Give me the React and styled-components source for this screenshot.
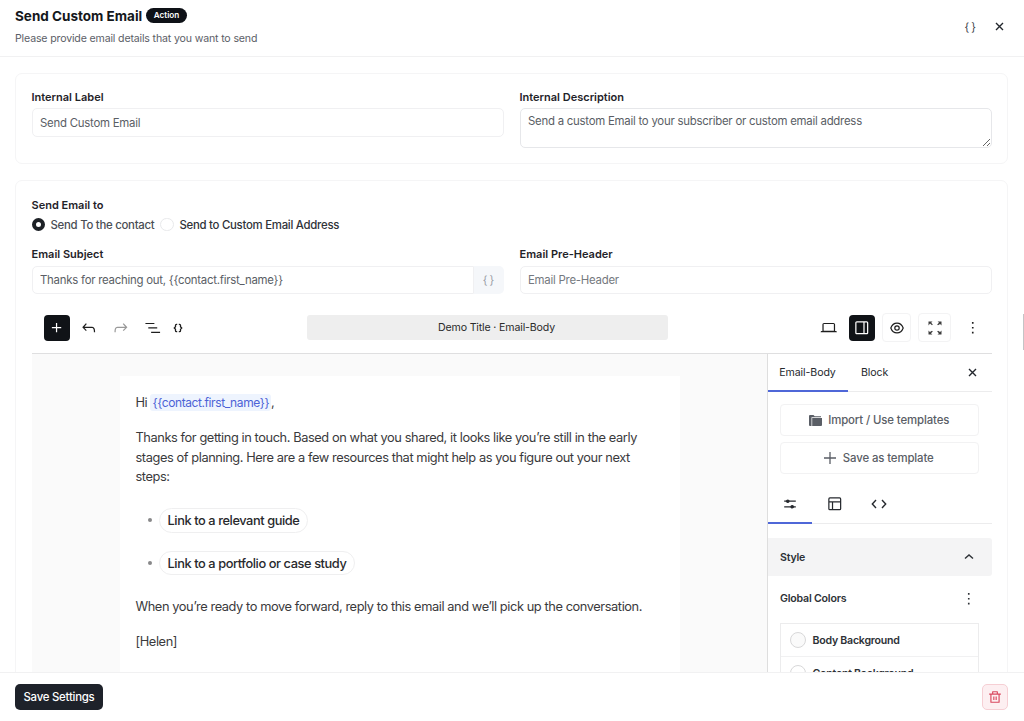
import React, { useState } from "react";
import styled, { createGlobalStyle } from "styled-components";

const GlobalStyle = createGlobalStyle`
  * {
    box-sizing: border-box;
  }
  body {
    margin: 0;
    background: #fff;
    color: #23272d;
    font-family: Inter, "Liberation Sans", sans-serif;
    font-size: 11.4px;
    letter-spacing: -0.24px;
    -webkit-font-smoothing: antialiased;
  }
  button, input, textarea {
    font-family: inherit;
    font-size: inherit;
    letter-spacing: inherit;
  }
  button {
    padding: 0;
    border: none;
    background: none;
    color: inherit;
    cursor: pointer;
  }
  svg {
    flex: none;
  }
`;

const Drawer = styled.div`
  display: flex;
  flex-direction: column;
  height: 721px;
  overflow: hidden;
`;

const Header = styled.header`
  display: flex;
  flex: none;
  align-items: center;
  justify-content: space-between;
  height: 57px;
  padding: 0 20px 3px 15px;
  border-bottom: 1px solid #f1f1f2;
`;

const TitleRow = styled.div`
  display: flex;
  align-items: center;
  gap: 4px;
  height: 18px;
`;

const Title = styled.h1`
  margin: 0;
  color: #15181c;
  font-size: 13.5px;
  font-weight: 700;
  letter-spacing: 0;
  white-space: nowrap;
`;

const Badge = styled.span`
  height: 15px;
  padding: 0 7.5px;
  border-radius: 8px;
  background: #0e1117;
  color: #fff;
  font-size: 8.2px;
  font-weight: 600;
  letter-spacing: 0;
  line-height: 15px;
`;

const Subtitle = styled.p`
  margin: 6px 0 0;
  color: #5c6067;
  font-size: 10.6px;
  letter-spacing: -0.16px;
  line-height: 16px;
`;

const HeaderActions = styled.div`
  display: flex;
  align-items: center;
  gap: 19px;
`;

const Braces = styled.span`
  color: ${(p) => p.$color || "#3c4046"};
  font-size: 11px;
  letter-spacing: 2px;
  margin-right: -2px;
`;

const Content = styled.main`
  flex: 1;
  min-height: 0;
  padding: 16px 16px 0 15px;
  overflow: hidden;
`;

const Card = styled.section`
  height: ${(p) => p.$height};
  padding: ${(p) => p.$padding};
  border: 1px solid #f5f5f6;
  border-radius: 7px;
  margin-bottom: 16px;
`;

const Columns = styled.div`
  display: grid;
  grid-template-columns: 1fr 1fr;
  gap: 16px;
`;

const Label = styled.label`
  display: block;
  height: 16px;
  margin-bottom: ${(p) => p.$gap || "3px"};
  color: #1f2329;
  font-weight: 600;
  font-size: 11px;
  letter-spacing: 0;
  line-height: 16px;
`;

const Input = styled.input`
  display: block;
  flex: 1;
  width: 100%;
  min-width: 0;
  height: ${(p) => p.$height || "28px"};
  padding: 0 8px 0 7.5px;
  border: 1px solid #f0f0f2;
  border-radius: 5px;
  background: #fff;
  color: #5a5e65;
  outline: none;
  &::placeholder {
    color: #757980;
  }
`;

const Textarea = styled.textarea`
  display: block;
  width: 100%;
  height: 40px;
  padding: 3.5px 7.5px;
  border: 1px solid #e6e7ea;
  border-radius: 5px;
  color: #5a5e65;
  line-height: 17px;
  outline: none;
  resize: vertical;
`;

const InputGroup = styled.div`
  display: flex;
  & ${Input} {
    border-radius: 5px 0 0 5px;
  }
`;

const InputAppend = styled.button`
  width: 30px;
  height: 28px;
  border-radius: 0 5px 5px 0;
  background: #f5f7fa;
`;

const RadioRow = styled.div`
  display: flex;
  align-items: center;
  gap: 6px;
  height: 17px;
  margin-bottom: 13px;
  font-weight: 500;
  letter-spacing: -0.27px;
`;

const RadioOption = styled.label`
  display: flex;
  align-items: center;
  gap: 5.5px;
  color: ${(p) => (p.$checked ? "#4a4e55" : "#303339")};
`;

const RadioDot = styled.span`
  width: 13.5px;
  height: 13.5px;
  border: ${(p) => (p.$checked ? "4px solid #1d2126" : "1px solid #e8e9eb")};
  border-radius: 50%;
`;

const Toolbar = styled.div`
  display: flex;
  align-items: center;
  height: 51px;
  margin-top: 8px;
  padding: 0 4.5px 0 12.5px;
`;

const ToolGroup = styled.div`
  display: flex;
  flex: ${(p) => (p.$grow ? 1 : "none")};
  align-items: center;
  justify-content: ${(p) => (p.$grow ? "flex-end" : "flex-start")};
  gap: ${(p) => p.$gap || "6px"};
  width: ${(p) => p.$width || "auto"};
`;

const ToolButton = styled.button`
  display: flex;
  align-items: center;
  justify-content: center;
  width: ${(p) => p.$width || "26px"};
  height: ${(p) => (p.$outlined ? "29px" : "26px")};
  border: ${(p) => (p.$outlined ? "1px solid #f3f3f4" : "none")};
  border-radius: 4px;
  background: ${(p) => (p.$dark ? "#101317" : "transparent")};
  color: ${(p) => (p.$dark ? "#fff" : p.$muted ? "#999" : "#1e1e1e")};
`;

const DocumentTitle = styled.div`
  width: 361px;
  height: 25.5px;
  padding-left: 18px;
  border-radius: 3px;
  background: #eee;
  color: #2b2b2b;
  font-size: 10.6px;
  letter-spacing: -0.15px;
  line-height: 26px;
  text-align: center;
`;

const Editor = styled.div`
  display: flex;
  height: 400px;
  border-top: 1px solid #dfdfe0;
`;

const Canvas = styled.div`
  flex: 1;
  min-width: 0;
  padding: 22px 87px 0 88px;
  background: #fafafa;
`;

const Paper = styled.article`
  height: 400px;
  padding: 17px 16px;
  background: #fff;
  color: #3a3a3c;
  font-size: 12.8px;
  line-height: 19.5px;
  white-space: nowrap;
  letter-spacing: -0.41px;
`;

const Paragraph = styled.p`
  margin: 0 0 15.5px;
`;

const MergeTag = styled.span`
  padding: 1px 2px;
  border-radius: 3px;
  background: #eef4fe;
  color: #4c62d6;
  font-size: 12px;
`;

const LinkList = styled.ul`
  display: flex;
  flex-direction: column;
  gap: 18px;
  margin: 21.5px 0 21.5px;
  padding: 0 0 0 12.5px;
  list-style: none;
`;

const LinkItem = styled.li`
  display: flex;
  align-items: center;
  gap: 7px;
  &::before {
    content: "";
    width: 4px;
    height: 4px;
    border-radius: 50%;
    background: #88888a;
  }
`;

const LinkPill = styled.a`
  height: 24.5px;
  padding: 0 7.5px;
  border: 1px solid #efeff0;
  border-radius: 13px;
  color: #28292c;
  font-weight: 500;
  line-height: 23px;
`;

const Sidebar = styled.aside`
  flex: none;
  width: 225px;
  border-left: 1px solid #dedede;
`;

const TabBar = styled.div`
  display: flex;
  height: 38px;
  border-bottom: 1px solid #ececed;
`;

const Tab = styled.button`
  display: flex;
  align-items: center;
  justify-content: center;
  width: ${(p) => p.$width};
  height: 38px;
  border-bottom: 2px solid ${(p) => (p.$active ? "#4f67d8" : "transparent")};
  color: #26292e;
  font-size: 10.6px;
  letter-spacing: -0.1px;
`;

const TabClose = styled.button`
  display: flex;
  align-items: center;
  margin-left: auto;
  padding: 0 15px 1px 0;
`;

const TemplateButtons = styled.div`
  display: flex;
  flex-direction: column;
  gap: 6px;
  padding: 12px 13px 12px 12px;
`;

const TemplateButton = styled.button`
  display: flex;
  align-items: center;
  justify-content: center;
  gap: 6.5px;
  height: 32px;
  border: 1px solid #f2f2f3;
  border-radius: 4px;
  color: #5a5e66;
  font-weight: 500;
  letter-spacing: -0.12px;
`;

const PanelHeading = styled.div`
  display: flex;
  align-items: center;
  justify-content: space-between;
  height: ${(p) => p.$height};
  margin-top: ${(p) => p.$top || 0};
  padding: 0 13px 0 12.5px;
  border-radius: 0 3px 3px 0;
  background: ${(p) => p.$background || "none"};
  color: #2d3136;
  font-size: 10.6px;
  font-weight: 600;
  letter-spacing: -0.2px;
`;

const ColorList = styled.div`
  margin: 2px 13px 0 12px;
  border: 1px solid #ececed;
`;

const ColorRow = styled.div`
  display: flex;
  align-items: center;
  gap: 7px;
  height: 33px;
  padding-left: 9px;
  border-bottom: 1px solid #f1f1f2;
  color: #2d3136;
  font-size: 10.6px;
  font-weight: 600;
`;

const Swatch = styled.span`
  width: 16px;
  height: 16px;
  border: 1px solid #d8d8d9;
  border-radius: 50%;
  background: ${(p) => p.$color};
`;

const Footer = styled.footer`
  display: flex;
  flex: none;
  align-items: center;
  justify-content: space-between;
  height: 49px;
  padding: 0 16px 0 15px;
  border-top: 1px solid #f1f1f2;
  background: #fff;
`;

const SaveButton = styled.button`
  width: 88px;
  height: 26px;
  border-radius: 5px;
  background: #1e222a;
  color: #fff;
  font-weight: 500;
`;

const DeleteButton = styled.button`
  display: flex;
  align-items: center;
  justify-content: center;
  width: 26px;
  height: 26px;
  border: 1px solid #f6cfd4;
  border-radius: 5px;
  background: #fdeff1;
  color: #d9485f;
`;

const ScrollThumb = styled.div`
  position: absolute;
  top: 314px;
  right: 0;
  width: 1px;
  height: 36px;
  background: #c4c4c6;
`;

const icons = {
  plus: "M11 12.5V17.5H12.5V12.5H17.5V11H12.5V6H11V11H6V12.5H11Z",
  undo: "M18.3 11.7c-.6-.6-1.4-.9-2.3-.9H6.7l2.9-3.3-1.1-1-4.5 5L8.5 16l1-1-2.7-2.7H16c.5 0 .9.2 1.3.5 1 1 1 3.4 1 4.5v.3h1.5v-.2c0-1.5 0-4.3-1.5-5.7z",
  redo: "M15.6 6.5l-1.1 1 2.9 3.3H8c-.9 0-1.7.3-2.3.9-1.4 1.5-1.4 4.2-1.4 5.6v.2h1.5v-.3c0-1.1 0-3.5 1-4.5.3-.3.7-.5 1.3-.5h9.2L14.5 15l1.1 1.1 4.6-4.6-4.6-5z",
  listView: "M3 6h11v1.5H3V6Zm3.5 5.5h11V13h-11v-1.5ZM21 17H10v1.5h11V17Z",
  desktop:
    "M20.5 16h-.7V8c0-1.1-.9-2-2-2H6.2c-1.1 0-2 .9-2 2v8h-.7c-.8 0-1.5.7-1.5 1.5h20c0-.8-.7-1.5-1.5-1.5zM5.7 8c0-.3.2-.5.5-.5h11.6c.3 0 .5.2.5.5v7.6H5.7V8z",
  drawer:
    "M18 4H6c-1.1 0-2 .9-2 2v12c0 1.1.9 2 2 2h12c1.1 0 2-.9 2-2V6c0-1.1-.9-2-2-2zm-4 14.5H6c-.3 0-.5-.2-.5-.5V6c0-.3.2-.5.5-.5h8v13zm4.5-.5c0 .3-.2.5-.5.5h-2.5v-13H18c.3 0 .5.2.5.5v12z",
  more: "M13 19h-2v-2h2v2zm0-6h-2v-2h2v2zm0-6h-2V5h2v2z",
  layout:
    "M18 5.5H6a.5.5 0 00-.5.5v3h13V6a.5.5 0 00-.5-.5zm.5 5H10v8h8a.5.5 0 00.5-.5v-7.5zm-10 0h-3V18a.5.5 0 00.5.5h2.5v-8zM6 4h12a2 2 0 012 2v12a2 2 0 01-2 2H6a2 2 0 01-2-2V6a2 2 0 012-2z",
  trash:
    "M17 6H22V8H20V21C20 21.5523 19.5523 22 19 22H5C4.44772 22 4 21.5523 4 21V8H2V6H7V3C7 2.44772 7.44772 2 8 2H16C16.5523 2 17 2.44772 17 3V6ZM18 8H6V20H18V8ZM9 11H11V17H9V11ZM13 11H15V17H13V11ZM9 4V6H15V4H9Z",
};

const Icon = ({ name, size = 19.5 }) => (
  <svg width={size} height={size} viewBox="0 0 24 24" fill="currentColor">
    <path d={icons[name]} />
  </svg>
);

const EyeIcon = () => (
  <svg width="14" height="14" viewBox="0 0 14 14" fill="none" stroke="currentColor" strokeWidth="1.2">
    <path d="M.8 7C2 3.700 4.300 2.100 7 2.100S12 3.700 13.200 7C12 10.300 9.700 11.900 7 11.900S2 10.300.8 7z" />
    <circle cx="7" cy="7" r="2.200" />
  </svg>
);

const ExpandIcon = () => (
  <svg width="14" height="14" viewBox="0 0 14 14" fill="#3e3e3e">
    <path d="M.5.5h4L3.200 1.800 4.800 3.400 4 4.200 2 2.600.5 4.400z" />
    <path d="M13.500.5v4l-1.400-1.500L10 4.200 9.200 3.400 11 1.700 9.600.5z" />
    <path d="M.5 13.500v-4L1.900 11 4 9.800l.8.8L3 12.300l1.400 1.200z" />
    <path d="M13.500 13.500h-4l1.400-1.200L9.200 10.600 10 9.800l2.100 1.300 1.400-1.600z" />
  </svg>
);

const ShortcodeIcon = () => (
  <svg width="10" height="10" viewBox="0 0 10 10" fill="none" stroke="currentColor" strokeWidth="1.300">
    <path d="M4.200 1.300H3.500Q2.500 1.300 2.500 2.300v1.500L1.300 5l1.200 1.200v1.500q0 1 1 1h.7" />
    <path d="M5.800 1.300h.7q1 0 1 1v1.500L8.700 5 7.500 6.200v1.500q0 1-1 1h-.7" />
  </svg>
);

const SlidersIcon = () => (
  <svg width="14" height="12" viewBox="0 0 14 12" fill="currentColor" stroke="currentColor" strokeWidth="1.200">
    <path d="M1.200 3.200h11.600M1.200 8.800h11.600" />
    <circle cx="4.800" cy="3.200" r="1.200" />
    <circle cx="9.200" cy="8.800" r="1.200" />
  </svg>
);

const CodeIcon = () => (
  <svg width="16" height="10" viewBox="0 0 16 10" fill="none" stroke="currentColor" strokeWidth="1.400">
    <path d="M5 1L1.300 5 5 9M11 1l3.700 4L11 9" />
  </svg>
);

const ChevronUpIcon = () => (
  <svg width="20" height="10" viewBox="0 0 20 10" fill="none" stroke="currentColor" strokeWidth="1.400">
    <path d="M6 6.500l4-3.500 4 3.500" />
  </svg>
);

const CloseIcon = () => (
  <svg width="9" height="9" viewBox="0 0 9 9" stroke="currentColor" strokeWidth="1.400">
    <path d="M1 1l7 7M8 1L1 8" />
  </svg>
);

const FolderIcon = () => (
  <svg width="13" height="11" viewBox="0 0 13 11" fill="currentColor">
    <path d="M0 1Q0 0 1 0h3.500l1.200 1.200H12v1H2.500V11H1Q0 11 0 10z" />
    <path d="M3.200 3H13v7q0 1-1 1H3.200z" />
  </svg>
);

const AddIcon = () => (
  <svg width="12" height="12" viewBox="0 0 12 12" stroke="currentColor" strokeWidth="1.300">
    <path d="M6 0v12M0 6h12" />
  </svg>
);

function EmailSidebar() {
  return (
    <Sidebar>
      <TabBar>
        <Tab $width="80px" $active>
          Email-Body
        </Tab>
        <Tab $width="54px">Block</Tab>
        <TabClose>
          <CloseIcon />
        </TabClose>
      </TabBar>
      <TemplateButtons>
        <TemplateButton>
          <FolderIcon />
          Import / Use templates
        </TemplateButton>
        <TemplateButton>
          <AddIcon />
          Save as template
        </TemplateButton>
      </TemplateButtons>
      <TabBar>
        <Tab $width="44px" $active>
          <SlidersIcon />
        </Tab>
        <Tab $width="46px">
          <Icon name="layout" />
        </Tab>
        <Tab $width="43px">
          <CodeIcon />
        </Tab>
      </TabBar>
      <PanelHeading $height="38px" $top="14px" $background="#f4f4f5">
        Style
        <ChevronUpIcon />
      </PanelHeading>
      <PanelHeading $height="45px">
        Global Colors
        <Icon name="more" />
      </PanelHeading>
      <ColorList>
        <ColorRow>
          <Swatch $color="#fafafa" />
          Body Background
        </ColorRow>
        <ColorRow>
          <Swatch $color="#fff" />
          Content Background
        </ColorRow>
      </ColorList>
    </Sidebar>
  );
}

function App() {
  const [label, setLabel] = useState("Send Custom Email");
  const [description, setDescription] = useState(
    "Send a custom Email to your subscriber or custom email address"
  );
  const [subject, setSubject] = useState(
    "Thanks for reaching out, {{contact.first_name}}"
  );
  const [preHeader, setPreHeader] = useState("");

  return (
    <Drawer>
      <GlobalStyle />
      <Header>
        <div>
          <TitleRow>
            <Title>Send Custom Email</Title>
            <Badge>Action</Badge>
          </TitleRow>
          <Subtitle>Please provide email details that you want to send</Subtitle>
        </div>
        <HeaderActions>
          <Braces>{"{}"}</Braces>
          <CloseIcon />
        </HeaderActions>
      </Header>

      <Content>
        <Card $height="91px" $padding="15px 15.5px">
          <Columns>
            <div>
              <Label>Internal Label</Label>
              <Input
                $height="29px"
                value={label}
                onChange={(e) => setLabel(e.target.value)}
              />
            </div>
            <div>
              <Label>Internal Description</Label>
              <Textarea
                value={description}
                onChange={(e) => setDescription(e.target.value)}
              />
            </div>
          </Columns>
        </Card>

        <Card $height="600px" $padding="16px 15.5px">
          <Label>Send Email to</Label>
          <RadioRow>
            <RadioOption $checked>
              <RadioDot $checked />
              Send To the contact
            </RadioOption>
            <RadioOption>
              <RadioDot />
              Send to Custom Email Address
            </RadioOption>
          </RadioRow>
          <Columns>
            <div>
              <Label $gap="4px">Email Subject</Label>
              <InputGroup>
                <Input
                  value={subject}
                  onChange={(e) => setSubject(e.target.value)}
                />
                <InputAppend>
                  <Braces $color="#9a9ea6">{"{}"}</Braces>
                </InputAppend>
              </InputGroup>
            </div>
            <div>
              <Label $gap="4px">Email Pre-Header</Label>
              <Input
                placeholder="Email Pre-Header"
                value={preHeader}
                onChange={(e) => setPreHeader(e.target.value)}
              />
            </div>
          </Columns>

          <Toolbar>
            <ToolGroup $width="263px">
              <ToolButton $dark>
                <Icon name="plus" />
              </ToolButton>
              <ToolButton>
                <Icon name="undo" />
              </ToolButton>
              <ToolButton $muted>
                <Icon name="redo" />
              </ToolButton>
              <ToolButton>
                <Icon name="listView" />
              </ToolButton>
              <ToolButton $width="12px">
                <ShortcodeIcon />
              </ToolButton>
            </ToolGroup>
            <DocumentTitle>Demo Title · Email-Body</DocumentTitle>
            <ToolGroup $grow $gap="7px">
              <ToolButton>
                <Icon name="desktop" />
              </ToolButton>
              <ToolButton $dark>
                <Icon name="drawer" />
              </ToolButton>
              <ToolButton $outlined $width="29px">
                <EyeIcon />
              </ToolButton>
              <ToolButton $outlined $width="33px">
                <ExpandIcon />
              </ToolButton>
              <ToolButton $width="29px">
                <Icon name="more" />
              </ToolButton>
            </ToolGroup>
          </Toolbar>

          <Editor>
            <Canvas>
              <Paper>
                <Paragraph>
                  Hi <MergeTag>{"{{contact.first_name}}"}</MergeTag>,
                </Paragraph>
                <Paragraph>
                  Thanks for getting in touch. Based on what you shared, it
                  looks like you’re still in the early
                  <br />
                  stages of planning. Here are a few resources that might help
                  as you figure out your next
                  <br />
                  steps:
                </Paragraph>
                <LinkList>
                  <LinkItem>
                    <LinkPill>Link to a relevant guide</LinkPill>
                  </LinkItem>
                  <LinkItem>
                    <LinkPill>Link to a portfolio or case study</LinkPill>
                  </LinkItem>
                </LinkList>
                <Paragraph>
                  When you’re ready to move forward, reply to this email and
                  we’ll pick up the conversation.
                </Paragraph>
                <Paragraph>[Helen]</Paragraph>
              </Paper>
            </Canvas>
            <EmailSidebar />
          </Editor>
        </Card>
      </Content>

      <Footer>
        <SaveButton>Save Settings</SaveButton>
        <DeleteButton>
          <Icon name="trash" size={14} />
        </DeleteButton>
      </Footer>
      <ScrollThumb />
    </Drawer>
  );
}

export default App;
